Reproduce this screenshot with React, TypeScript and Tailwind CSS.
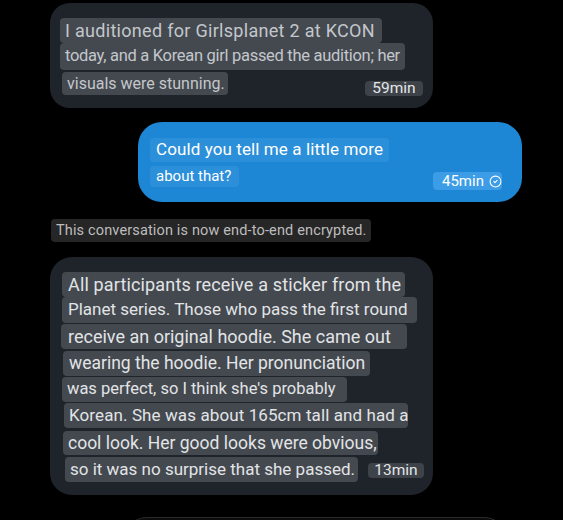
import React from 'react';
import { CircleCheck } from 'lucide-react';

type LineProps = {
  text: string;
  className: string;
};

// one translated line, with its own grey box behind it
const Line = ({ text, className }: LineProps) => (
  <div className={`flex items-center whitespace-nowrap rounded-[4px] ${className}`}>
    {text}
  </div>
);

const firstLines = [
  { text: 'I auditioned for Girlsplanet 2 at KCON', className: 'w-[322px] h-[25px] pl-[5px] text-[18px] tracking-[0.3px]' },
  { text: 'today, and a Korean girl passed the audition; her', className: 'w-[345px] h-[27px] pl-[5px] text-[16.5px] tracking-[-0.3px]' },
];

const thirdLines = [
  { text: 'All participants receive a sticker from the', className: 'w-[343px] h-[25px] pl-[6px] text-[18px] tracking-[0.15px]' },
  { text: 'Planet series. Those who pass the first round', className: 'w-[355px] h-[26px] pl-[6px] text-[17px]' },
  { text: 'receive an original hoodie. She came out', className: 'ml-[-1px] mt-[1px] w-[346px] h-[25px] pl-[7px] text-[18px]' },
  { text: 'wearing the hoodie. Her pronunciation', className: 'ml-[1px] mt-[2px] w-[307px] h-[25px] pl-[6px] text-[17.5px]' },
  { text: "was perfect, so I think she's probably", className: 'mt-[1px] w-[285px] h-[25px] pl-[5px] text-[16.5px]' },
  { text: 'Korean. She was about 165cm tall and had a', className: 'ml-[2px] mt-[1px] w-[344px] h-[25px] pl-[5px] text-[17px] tracking-[0.1px]' },
  { text: 'cool look. Her good looks were obvious,', className: 'ml-[1px] mt-[3px] w-[315px] h-[24px] pl-[5px] text-[17.5px]' },
];

export default function App() {
  return (
    <div className="w-[563px] h-[520px] overflow-hidden bg-black font-['Roboto',sans-serif]">
      {/* received */}
      <div className="ml-[50px] mt-[3px] w-[383px] h-[105px] rounded-[20px] bg-[#1e242a] pl-[10px] pr-[10px] pt-[15px] text-[#c3c7cb]">
        {firstLines.map((l) => (
          <Line key={l.text} text={l.text} className={`bg-[#444950] ${l.className}`} />
        ))}
        <div className="flex items-start justify-between">
          <Line text="visuals were stunning." className="ml-[2px] mt-[2px] w-[166px] h-[23px] pl-[5px] text-[16px] bg-[#444950]" />
          <div className="mt-[11px] w-[58px] h-[15px] rounded-[4px] bg-[#3d4349] flex items-center justify-center text-[15.5px] text-[#e4e6e8]">
            59min
          </div>
        </div>
      </div>

      {/* sent */}
      <div className="ml-[138px] mt-[14px] w-[384px] h-[80px] rounded-[24px] bg-[#1e87d5] pl-[12px] pr-[20px] pt-[16px] text-white">
        <Line text="Could you tell me a little more" className="w-[239px] h-[24px] pl-[6px] text-[17px] tracking-[0.1px] bg-[#2c8fd9]" />
        <div className="flex items-start justify-between">
          <Line text="about that?" className="mt-[4px] w-[89px] h-[21px] pl-[6px] text-[15px] bg-[#2c8fd9]" />
          <div className="mt-[10px] w-[69px] h-[18px] rounded-[4px] bg-[#3c9ce6] flex items-center gap-[5px] pl-[9px] text-[15px]">
            45min
            <CircleCheck size={13} strokeWidth={2} />
          </div>
        </div>
      </div>

      <div className="ml-[51px] mt-[17px] w-[320px] h-[23px] rounded-[4px] bg-[#262626] flex items-center pl-[5px] text-[14.5px] tracking-[0.15px] text-[#bdbdbd] whitespace-nowrap">
        This conversation is now end-to-end encrypted.
      </div>

      {/* received */}
      <div className="ml-[50px] mt-[15px] w-[383px] h-[238px] rounded-[22px] bg-[#1e242a] pl-[12px] pr-[9px] pt-[15px] text-[#e2e4e6]">
        {thirdLines.map((l) => (
          <Line key={l.text} text={l.text} className={`bg-[#444950] ${l.className}`} />
        ))}
        <div className="flex items-start justify-between">
          <Line text="so it was no surprise that she passed." className="ml-[3px] mt-[2px] w-[293px] h-[25px] pl-[5px] text-[17px] bg-[#444950]" />
          <div className="mt-[8px] w-[56px] h-[15px] rounded-[4px] bg-[#3d4349] flex items-center justify-center text-[15.5px] text-[#e4e6e8]">
            13min
          </div>
        </div>
      </div>

      <div className="ml-[123px] mt-[22px] w-[385px] h-[40px] rounded-t-[24px] border border-[#2a2a2a] bg-[#0b0b0b]" />
    </div>
  );
}
